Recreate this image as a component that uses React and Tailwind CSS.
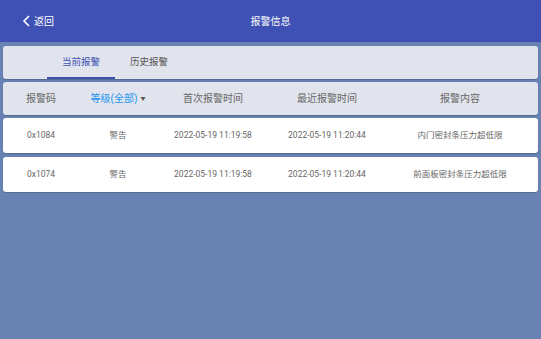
import React from "react";

const font = { fontFamily: 'Roboto, "Noto Sans CJK SC", sans-serif' };

const rows = [
  { code: "0x1084", level: "警告", first: "2022-05-19 11:19:58", last: "2022-05-19 11:20:44", content: "内门密封条压力超低限" },
  { code: "0x1074", level: "警告", first: "2022-05-19 11:19:58", last: "2022-05-19 11:20:44", content: "前面板密封条压力超低限" },
];

export default function App() {
  return (
    <div className="w-[541px] h-[339px] bg-[#6883b3] flex flex-col overflow-hidden" style={font}>
      <div className="h-[42px] bg-[#3f51b5] flex items-center relative shrink-0">
        <div className="flex items-center pl-[22px] gap-[3px] text-white text-[10px]">
          <svg width="9" height="12" viewBox="0 0 9 12" fill="none">
            <path d="M7 1 L2 6 L7 11" stroke="white" strokeWidth="1.6" />
          </svg>
          <span>返回</span>
        </div>
        <div className="absolute left-0 right-0 text-center text-white text-[10px] pointer-events-none">报警信息</div>
      </div>
      <div className="flex flex-col px-[3px] pt-[4px] gap-[3px]">
        <div className="h-[33px] bg-[#e1e4ec] rounded-[3px] flex items-stretch pl-[44px] shadow-[0_1px_1px_rgba(0,0,0,0.2)]">
          <div className="w-[68px] flex items-center justify-center text-[9.5px] text-[#3f51b5] border-b-[2px] border-[#3f51b5] pt-[2px]">当前报警</div>
          <div className="w-[68px] flex items-center justify-center text-[9.5px] text-[#555]">历史报警</div>
        </div>
        <div className="h-[33px] bg-[#e1e4ec] rounded-[3px] flex items-center text-[10px] text-[#666] shadow-[0_1px_1px_rgba(0,0,0,0.2)]">
          <div className="w-[76px] text-center">报警码</div>
          <div className="w-[75px] flex items-center justify-center gap-[3px] text-[#2196f3] pl-[3px]">
            <span>等级(全部)</span>
            <span className="text-[#555] text-[5px]">▼</span>
          </div>
          <div className="w-[118px] text-center">首次报警时间</div>
          <div className="w-[110px] text-center">最近报警时间</div>
          <div className="flex-1 text-center">报警内容</div>
        </div>
        <div className="flex flex-col gap-[4px]">
          {rows.map((r) => (
            <div key={r.code} className="h-[35px] bg-white rounded-[3px] flex items-center text-[8.5px] text-[#666] shadow-[0_1px_1px_rgba(0,0,0,0.2)]">
              <div className="w-[76px] text-center">{r.code}</div>
              <div className="w-[75px] text-center pl-[3px]">{r.level}</div>
              <div className="w-[118px] text-center">{r.first}</div>
              <div className="w-[110px] text-center">{r.last}</div>
              <div className="flex-1 text-center">{r.content}</div>
            </div>
          ))}
        </div>
      </div>
    </div>
  );
}
